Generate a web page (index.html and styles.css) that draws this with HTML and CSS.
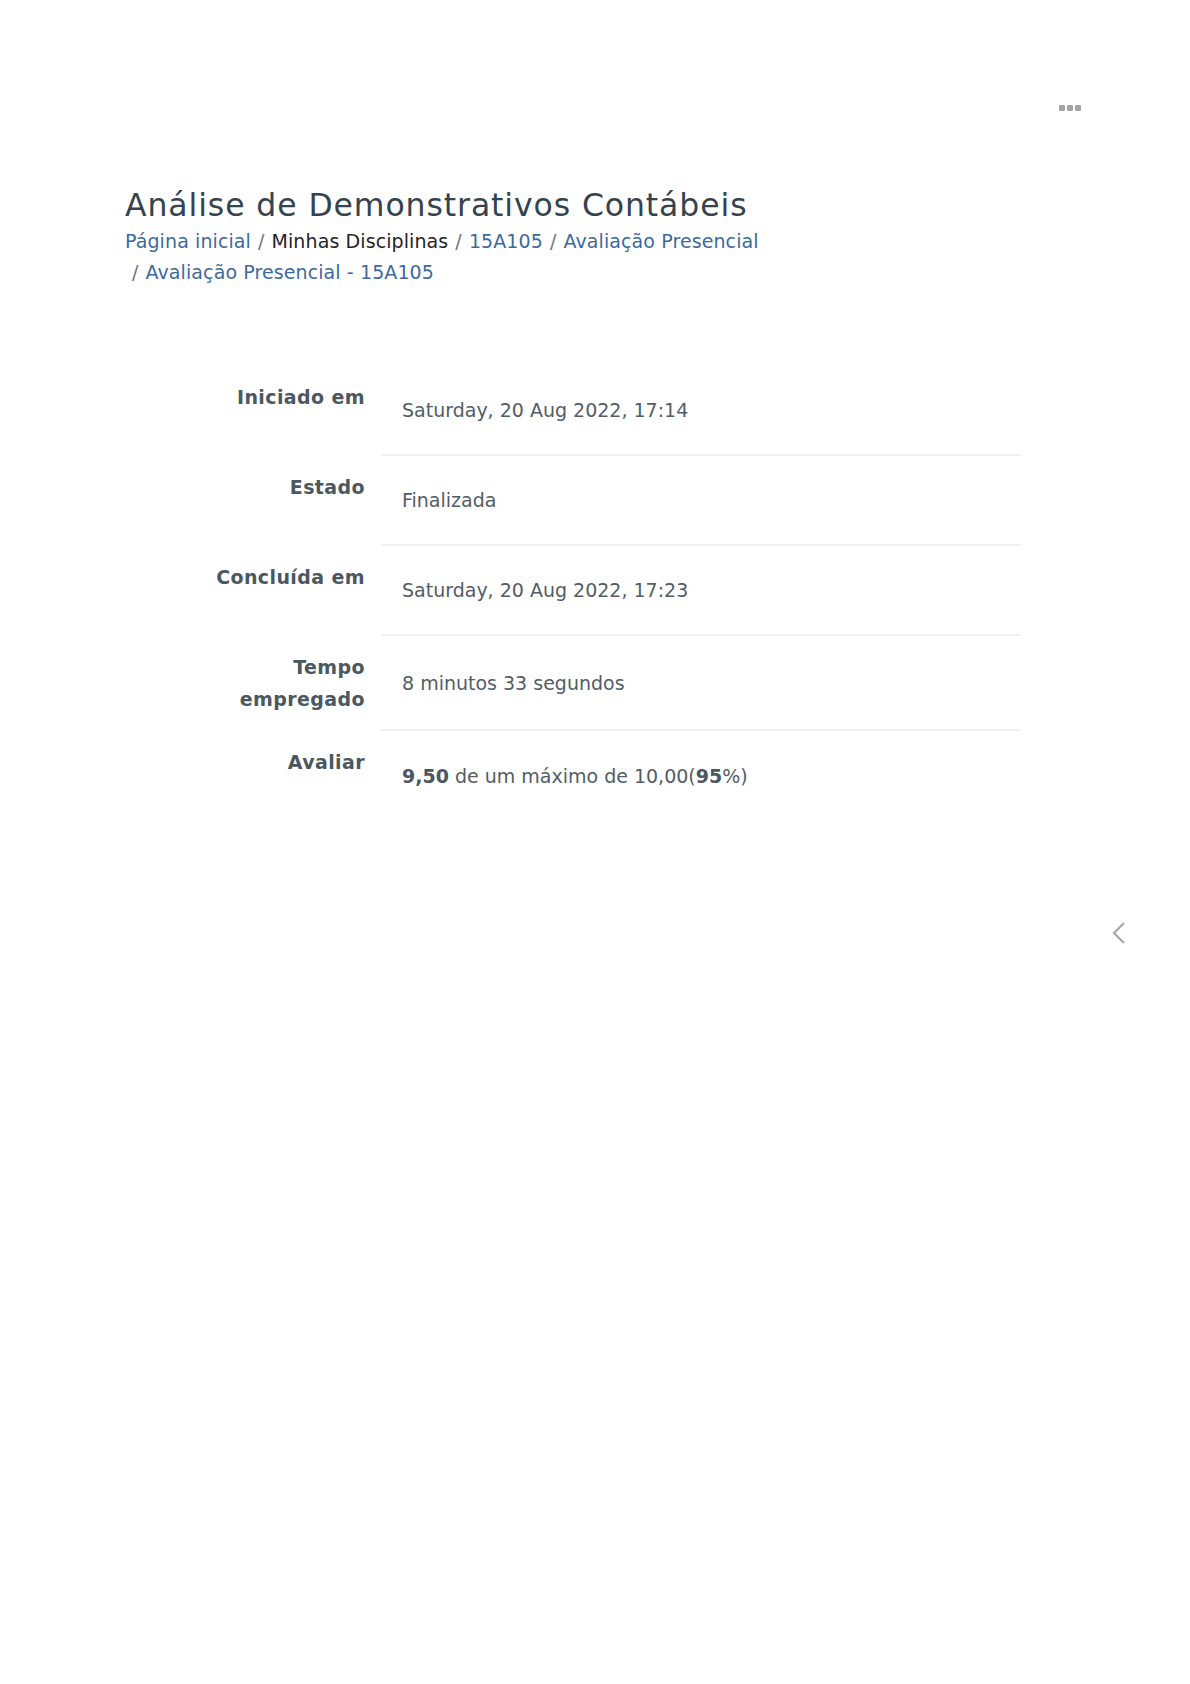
FILE: index.html
```html
<!DOCTYPE html>
<html lang="pt-BR">
<head>
  <meta charset="UTF-8" />
  <meta name="viewport" content="width=device-width, initial-scale=1.0" />
  <title>Análise de Demonstrativos Contábeis</title>
  <link rel="stylesheet" href="styles.css">
</head>
<body>
  <header class="topbar">
    <div class="actions-menu" title="Ações">
      <span></span><span></span><span></span>
    </div>
  </header>

  <main class="page">
    <div class="page-header">
      <h1>Análise de Demonstrativos Contábeis</h1>
      <ol class="breadcrumb">
        <li><a href="#">Página inicial</a></li>
        <li>Minhas Disciplinas</li>
        <li><a href="#">15A105</a></li>
        <li><a href="#">Avaliação Presencial</a></li>
        <li><a href="#">Avaliação Presencial - 15A105</a></li>
      </ol>
    </div>

    <section class="summary">
      <div class="summary-row">
        <div class="summary-label">Iniciado em</div>
        <div class="summary-value">Saturday, 20 Aug 2022, 17:14</div>
      </div>
      <div class="summary-row">
        <div class="summary-label">Estado</div>
        <div class="summary-value">Finalizada</div>
      </div>
      <div class="summary-row">
        <div class="summary-label">Concluída em</div>
        <div class="summary-value">Saturday, 20 Aug 2022, 17:23</div>
      </div>
      <div class="summary-row">
        <div class="summary-label">Tempo empregado</div>
        <div class="summary-value">8 minutos 33 segundos</div>
      </div>
      <div class="summary-row">
        <div class="summary-label">Avaliar</div>
        <div class="summary-value"><span><b>9,50</b> de um máximo de 10,00(<b>95</b>%)</span></div>
      </div>
    </section>
  </main>

  <button class="drawer-toggle" aria-label="Abrir bloco">
    <svg width="14" height="22" viewBox="0 0 14 22">
      <path d="M12 1 L2 11 L12 21" fill="none" stroke="#a7a7a7" stroke-width="2.2" />
    </svg>
  </button>
</body>
</html>
```

FILE: styles.css
```css
* {
  margin: 0;
  padding: 0;
  box-sizing: border-box;
}

body {
  font-family: "DejaVu Sans", "Open Sans", sans-serif;
  background: #fff;
  color: #525d66;
  font-size: 19px;
}

a {
  color: #3d6a9e;
  text-decoration: none;
}

.topbar {
  display: flex;
  justify-content: flex-end;
  padding: 105px 109px 0 0;
}

.actions-menu {
  display: flex;
  gap: 2px;
}

.actions-menu span {
  width: 6px;
  height: 6px;
  background: #a4a4a4;
  border-radius: 1px;
}

.page {
  padding-left: 125px;
}

.page-header {
  margin-top: 75px;
}

h1 {
  font-size: 31.5px;
  font-weight: 400;
  line-height: 38px;
  letter-spacing: 0.9px;
  color: #34434d;
}

.breadcrumb {
  list-style: none;
  display: flex;
  flex-wrap: wrap;
  max-width: 760px;
  margin-top: 2px;
  line-height: 31px;
  letter-spacing: 0.1px;
  color: #1f2428;
}

.breadcrumb li + li::before {
  content: "/";
  color: #6c757d;
  padding: 0 7px;
}

.summary {
  margin-top: 78px;
  margin-left: 50px;
}

.summary-row {
  display: flex;
}

.summary-label {
  width: 206px;
  padding: 15px 16px 16px 0;
  text-align: right;
  font-weight: 700;
  line-height: 32px;
  letter-spacing: 0.4px;
  color: #4b5761;
}

.summary-value {
  width: 640px;
  min-height: 90px;
  display: flex;
  align-items: center;
  padding: 0 21px;
  border-bottom: 2px solid #eff1f2;
  line-height: 28px;
}

.summary-row:last-child .summary-value {
  border-bottom: none;
}

.summary-value b {
  color: #4b5761;
}

.drawer-toggle {
  position: absolute;
  top: 922px;
  left: 1112px;
  border: none;
  background: none;
  cursor: pointer;
}
```
